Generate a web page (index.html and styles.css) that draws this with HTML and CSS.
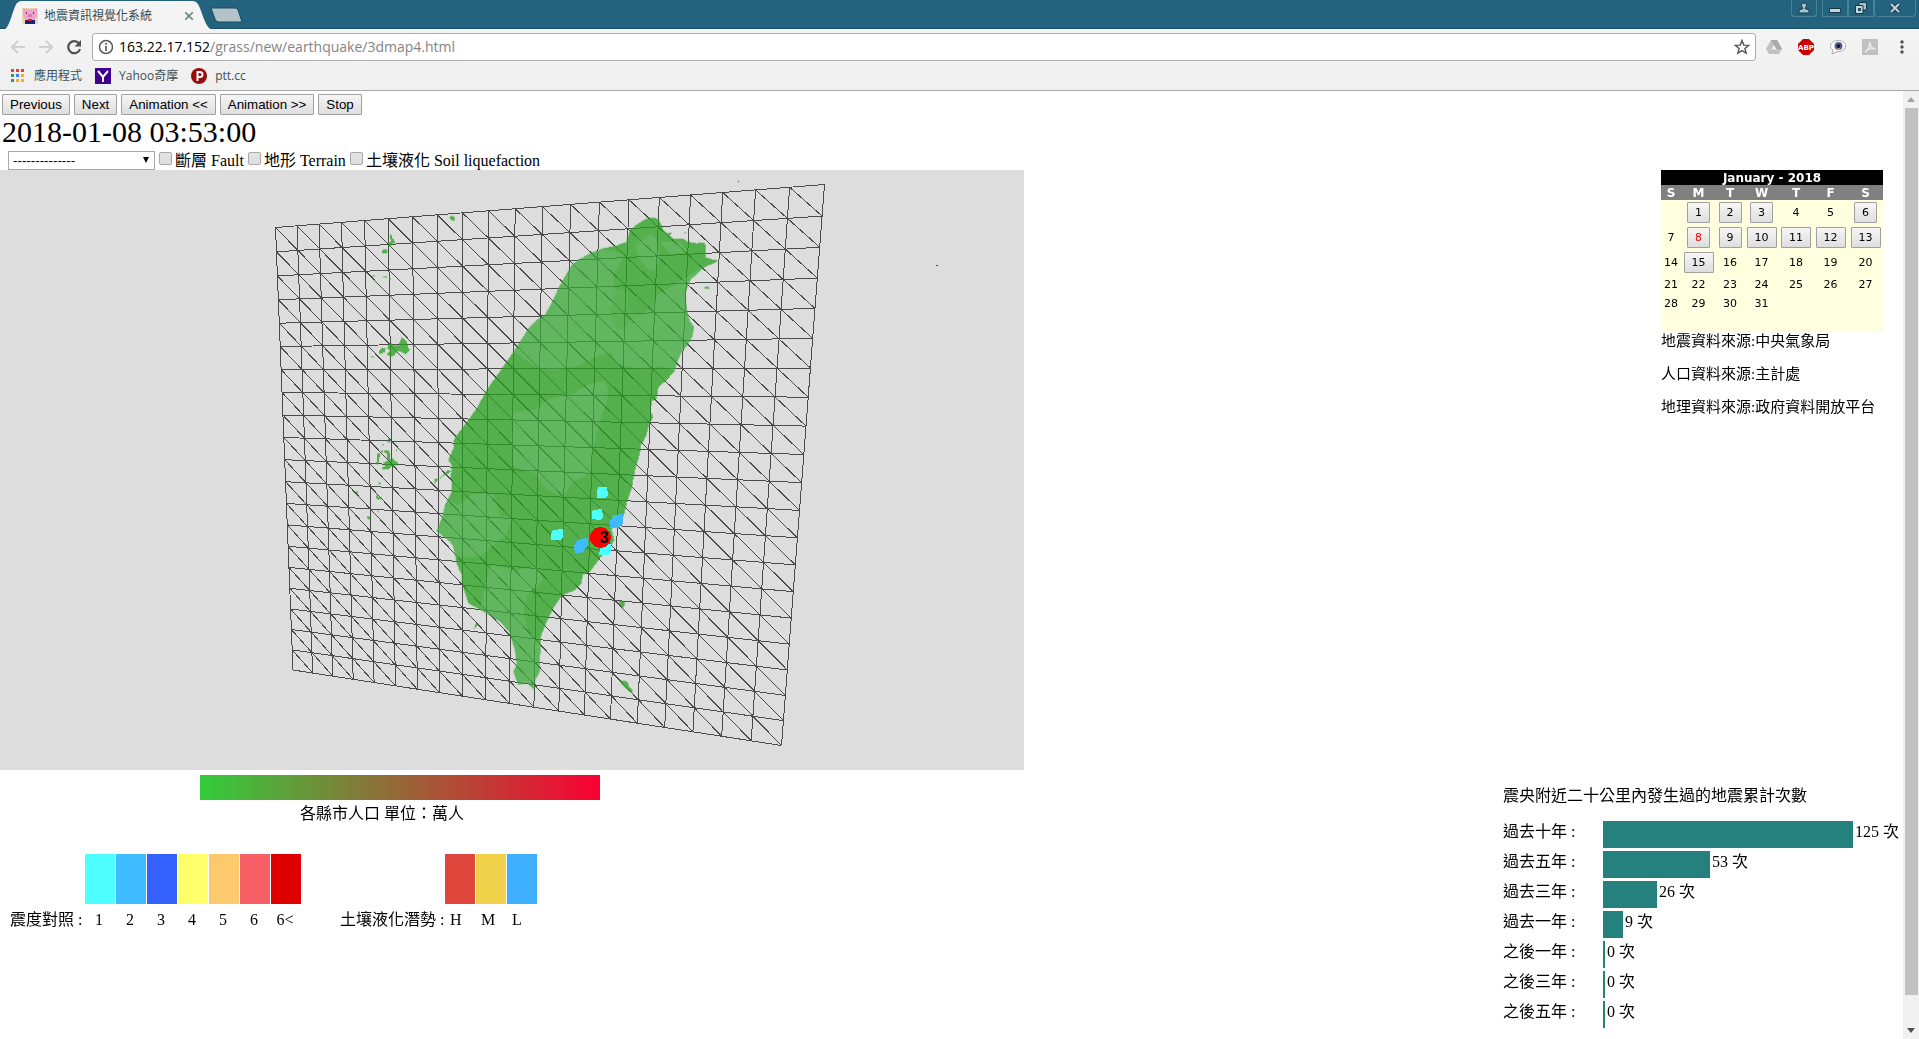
FILE: index.html
```html
<!DOCTYPE html>
<html lang="zh-Hant">
<head>
<meta charset="utf-8">
<title>地震資訊視覺化系統</title>
<link rel="stylesheet" href="styles.css">
</head>
<body>
<header class="browser">
  <div class="tabstrip">
    <div class="tab">
      <svg class="tab-shape" viewBox="0 0 208 29" aria-hidden="true"><path d="M0 29 C5 27 8 8 12 3 Q14 1 17 1 H188 Q191 1 193 4 C197 11 200 27 206 29Z" fill="#f4f4f4"/></svg>
      <svg class="icon" viewBox="0 0 16 16" aria-hidden="true"><path fill="#e8dca8" d="M0 0h16v16H0z"/><path fill="#f0a3cf" d="M1 0l4 1h6l4-1v9l-3 3H4L1 9z"/><path fill="#d97ab3" d="M6 6h4v3H6z"/><path fill="#733562" d="M4 4h1v2H4zm7 0h1v2h-1z"/><path fill="#172578" d="M3 12h10v4H3z"/><path fill="#d32738" d="M6 11h4v2H6z"/></svg>
      <span class="tab-title">地震資訊視覺化系統</span>
      <button class="plain" aria-label="關閉分頁"><svg class="icon-s" viewBox="0 0 8 8"><path d="M0 0l8 8M8 0L0 8" stroke="#6f8488" stroke-width="1.6"/></svg></button>
    </div>
    <button class="plain newtab" aria-label="新分頁"><svg viewBox="0 0 34 17"><path d="M2 1H26Q28 1 29 3L33 15H10Q7 15 6 12Z" fill="#b2c3ca" stroke="#194c62"/></svg></button>
    <div class="window">
      <button class="wbtn user" aria-label="使用者"><svg viewBox="0 0 12 12"><path d="M6 1a2.500 2.500 0 0 1 2 4L7 6.500l4 1.500v3H1V8l4-1.500L4 5a2.500 2.500 0 0 1 2-4z" fill="#a9c3ce" stroke="#15394a"/></svg></button>
      <div class="wgroup">
        <button class="wbtn" aria-label="最小化"><svg viewBox="0 0 12 12"><path d="M.500 6.500h11v4H.500z" fill="#c3d5dd" stroke="#15394a"/></svg></button>
        <button class="wbtn" aria-label="還原"><svg viewBox="0 0 12 12"><path d="M4 .500h7.500V8H4z" fill="#a9c3ce" stroke="#15394a"/><path d="M.500 3.500H8V11.500H.500z" fill="#c3d5dd" stroke="#15394a"/><path d="M3.500 6.500h2v2h-2z" fill="#24637e" stroke="#15394a"/></svg></button>
        <button class="wbtn wide" aria-label="關閉"><svg viewBox="0 0 12 12"><path d="M2 2l8 8M10 2l-8 8" stroke="#15394a" stroke-width="4"/><path d="M2 2l8 8M10 2l-8 8" stroke="#c3d5dd" stroke-width="2"/></svg></button>
      </div>
    </div>
  </div>
  <div class="toolbar">
    <div class="nav">
      <button class="plain" aria-label="上一頁"><svg class="icon" viewBox="0 0 16 16" fill="none" stroke="#cfcfcf" stroke-width="2"><path d="M15 8H2M8 2L2 8l6 6"/></svg></button>
      <button class="plain" aria-label="下一頁"><svg class="icon" viewBox="0 0 16 16" fill="none" stroke="#cfcfcf" stroke-width="2"><path d="M1 8h13M8 2l6 6-6 6"/></svg></button>
      <button class="plain" aria-label="重新載入"><svg class="icon" viewBox="0 0 16 16"><path d="M13 4.500A6 6 0 1 0 14 10" fill="none" stroke="#505050" stroke-width="2.200"/><path d="M15 1v6.500H8.500z" fill="#505050"/></svg></button>
    </div>
    <div class="omnibox">
      <svg class="icon" viewBox="0 0 16 16" aria-hidden="true"><circle cx="8" cy="8" r="6.500" fill="none" stroke="#5a5a5a" stroke-width="1.500"/><path d="M7.200 7h1.700v5H7.200zM7.200 4h1.700v1.700H7.200z" fill="#5a5a5a"/></svg>
      <span class="url"><b>163.22.17.152</b>/grass/new/earthquake/3dmap4.html</span>
      <button class="plain" aria-label="加入書籤"><svg class="icon" viewBox="0 0 16 16"><path d="M8 1.500l1.800 4.600 4.900.300-3.800 3.100 1.300 4.800L8 11.600l-4.200 2.700 1.300-4.800L1.300 6.400l4.900-.300z" fill="none" stroke="#555" stroke-width="1.400"/></svg></button>
    </div>
    <div class="exts">
      <svg class="icon" viewBox="0 0 16 16"><path d="M5 1h6l5 9-3 5H3l-3-5z" fill="#c2c2c2"/><path d="M5 1h6l5 9h-6z" fill="#aaa"/><path d="M8 6l2.500 4.500h-5z" fill="#f2f2f2"/></svg>
      <svg class="icon" viewBox="0 0 16 16"><path d="M5 0h6l5 5v6l-5 5H5l-5-5V5z" fill="#c80000"/><text x="8" y="11" class="abp">ABP</text></svg>
      <svg class="icon" viewBox="0 0 16 16"><path d="M8 1.500c5 0 7.500 2.500 7.500 5.500S13 12.500 8 12.500L2 15l1-4C-2 8 1 1.500 8 1.500z" fill="#fff" stroke="#aaa"/><circle cx="8.500" cy="7" r="4" fill="#5d6385"/><circle cx="8.500" cy="7" r="2" fill="#141a38"/><path d="M7 9h3v2H7z" fill="#b88a80"/></svg>
      <svg class="icon" viewBox="0 0 16 16"><path d="M0 0h16v16H0z" fill="#c0c0c0"/><path d="M3 13c3-2 5-6 4.500-10 1 5 3 7 6 7-4-1-8 0-10.500 3z" fill="none" stroke="#eee" stroke-width="1.300"/></svg>
      <svg class="icon" viewBox="0 0 16 16" fill="#505050"><circle cx="8" cy="3" r="1.700"/><circle cx="8" cy="8" r="1.700"/><circle cx="8" cy="13" r="1.700"/></svg>
    </div>
  </div>
  <nav class="bookmarks">
    <a href="#apps"><svg class="icon" viewBox="0 0 16 16"><path fill="#ea3c34" d="M1 1h3v3H1zM6 1h3v3H6zM11 1h3v3h-3z"/><path fill="#2e9d58" d="M1 6h3v3H1zM1 11h3v3H1z"/><path fill="#3f80ef" d="M6 6h3v3H6z"/><path fill="#f3b01c" d="M11 6h3v3h-3zM6 11h3v3H6zM11 11h3v3h-3z"/></svg>應用程式</a>
    <a href="#yahoo"><svg class="icon" viewBox="0 0 16 16"><path fill="#400090" d="M0 0h16v16H0z"/><path d="M3 3l5 6 5-6M8 9v5" fill="none" stroke="#fff" stroke-width="2"/></svg>Yahoo奇摩</a>
    <a href="#ptt"><svg class="icon" viewBox="0 0 16 16"><circle cx="8" cy="8" r="8" fill="#970c0c"/><path d="M6.500 13V4H9a2.500 2.500 0 0 1 0 5H6.500" fill="none" stroke="#fff" stroke-width="2"/></svg>ptt.cc</a>
  </nav>
</header>

<div class="viewport">
  <main class="page">
    <div class="playback">
      <button class="btn">Previous</button>
      <button class="btn">Next</button>
      <button class="btn">Animation &lt;&lt;</button>
      <button class="btn">Animation &gt;&gt;</button>
      <button class="btn">Stop</button>
    </div>
    <div class="time">2018-01-08 03:53:00</div>
    <div class="layers">
      <div class="picker"><select aria-label="圖層"><option>--------------</option></select></div>
      <label><input type="checkbox">斷層 Fault</label>
      <label><input type="checkbox">地形 Terrain</label>
      <label><input type="checkbox">土壤液化 Soil liquefaction</label>
    </div>
    <div class="board">
      <svg class="map" viewBox="0 170 1024 600" role="img" aria-label="台灣地震地圖">
        <defs>
          <clipPath id="coast"><path id="island" d="M670 22 685 28 695 45 700 60 715 72 730 85 760 87 773 95 800 100 825 97 827 120 828 142 845 148 860 150 858 157 845 162 820 173 805 188 785 205 773 225 767 250 768 280 773 310 780 335 792 350 787 380 772 405 755 425 742 455 733 485 710 510 685 532 680 565 665 573 662 605 670 620 658 640 648 680 633 705 630 730 615 780 606 830 590 880 580 920 560 930 545 960 553 990 540 1010 510 1045 480 1085 458 1095 455 1120 435 1140 395 1157 380 1180 370 1195 350 1235 332 1280 332 1320 328 1350 330 1385 315 1410 313 1440 290 1418 265 1425 250 1385 260 1365 255 1320 242 1280 238 1265 210 1235 170 1210 115 1180 105 1150 97 1125 95 1095 80 1060 70 1010 60 995 20 963 35 925 45 885 65 845 63 795 65 765 55 750 70 715 73 685 100 650 140 595 170 540 230 455 280 380 295 355 320 330 345 315 370 270 385 235 425 165 445 150 480 130 520 115 555 108 590 95 600 60 625 40 645 28Z"/></clipPath>
        </defs>
        <path id="grid" class="grid"/>
        <g class="land" transform="translate(430 210) scale(.33333)">
          <use href="#island" class="dark"/>
          <g class="light" clip-path="url(#coast)">
            <path d="M340 150 500 118 545 122 590 135 565 165 550 200 556 240 590 245 597 300 625 315 665 295 680 255 740 220 800 180 870 150 870 500 720 480 700 468 640 478 560 462 545 428 510 435 450 465 380 480 325 475 285 450 240 420Z"/>
            <path class="mid" d="M550 245 590 245 597 300 612 312 580 355 560 355 540 300Z"/>
            <path d="M250 605 315 600 350 570 430 550 470 525 525 510 535 545 530 575 505 650 490 720 482 790 430 815 400 860 350 840 315 790 250 770 245 690Z"/>
            <path d="M0 960 60 870 85 885 130 850 190 850 210 915 245 925 225 980 185 1010 150 1040 60 1040Z"/>
            <path d="M180 1065 260 1080 325 1070 340 1110 290 1160 280 1200 290 1260 335 1310 340 1450 240 1450 230 1270 150 1200 165 1130Z"/>
            <path d="M615 105 665 70 682 95 690 140 675 185 650 175 625 140ZM690 95 750 95 775 125 720 132Z"/>
          </g>
          <path class="dark" d="M57 22l8-5 9 4-1 10-8 0zM14 805l14 2 27-27 10 4-22 12-22 16-6 10zM132 1256l3-12 8-8 3 8-8 6zM565 1172l20 3-4 18-8-2zM568 1412l24 2 6 16 10 12-3 6-12-7-16-16zM822 230l14 0 2 5-12 1zM715 70l8-5 2 6-6 4zM763 66h3v4h-3z"/>
          <g class="dark" transform="translate(-510 -120)">
            <path d="M390 193l6 3-1 8 8 5 1 10-9 2-2 7-8 2 0-10 7-8zM366 240l16-2 1 10-8 4-9-4zM333 315l14 3-1 3-10-2zM369 318l13 2-3 4-10-3zM387 322l8 4-8 6zM474 160h5v4h-5zM425 502l14 11 5 18 6 10-6 6-8 6-14-9-12 1-6 10-8 4-12-2-4-6 10-8-8-8 4-15 10 1 8 6 12-2zM358 540l9-7 10 3-3 10-12 6-5-4zM334 560l6-2 1 3-5 2z"/>
            <path d="M384 805l8 6-4 8-9-3 6-3zM367 822h5v5h-5zM408 838l3 3-4 7zM363 842h6v6h-6zM374 841h12l4 10-1 18 10-4 4 7 12 5 0 9-20 2-10 9-18 2-2-6 12-7-8-8 14-6-3-22-10-3zM352 850h8v5l-5 26-8 2 4-10z"/>
            <path d="M288 964h6v5h-6zM346 976l8 1 2 5 10 0-2 6-14-1zM351 1022l6 1-2 5zM322 1040l10 0-2 10-10-5zM385 1032h8v2h-8zM405 1030h4v6h-4zM350 936l6 1 8 4-4 2z"/>
          </g>
        </g>
        <path d="M738 181h1v1h-1zM936 265h2v1h-2z" fill="#444"/>
        <g fill="#4dffff"><path d="M598 487h9l1 8-2 3h-9v-7zM593 510l9-1 1 8-3 3-8-1v-6zM553 530l10-1v8l-2 3h-10v-6zM601 545l10-1v8l-2 3h-10z"/></g>
        <g fill="#3ebcff"><path d="M614 515l9-1v9l-5 5h-8v-7zM579 539l9-1v7l-6 8h-7l-1-7z"/></g>
        <circle cx="600.500" cy="537.500" r="10.500" fill="#f00"/>
        <text x="600" y="543" class="mag">3</text>
      </svg>

      <aside class="side">
        <table class="calendar">
          <caption>January - 2018</caption>
          <colgroup><col class="c1"><col class="c2"><col class="c3"><col class="c2"><col class="c4"><col class="c2"><col class="c2"></colgroup>
          <thead><tr><th>S</th><th>M</th><th>T</th><th>W</th><th>T</th><th>F</th><th>S</th></tr></thead>
          <tbody>
            <tr class="tall"><td></td><td><button>1</button></td><td><button>2</button></td><td><button>3</button></td><td>4</td><td>5</td><td><button>6</button></td></tr>
            <tr class="tall"><td>7</td><td><button class="today">8</button></td><td><button>9</button></td><td><button>10</button></td><td><button>11</button></td><td><button>12</button></td><td><button>13</button></td></tr>
            <tr class="tall"><td>14</td><td><button>15</button></td><td>16</td><td>17</td><td>18</td><td>19</td><td>20</td></tr>
            <tr><td>21</td><td>22</td><td>23</td><td>24</td><td>25</td><td>26</td><td>27</td></tr>
            <tr><td>28</td><td>29</td><td>30</td><td>31</td><td></td><td></td><td></td></tr>
            <tr><td colspan="7"></td></tr>
          </tbody>
        </table>
        <p>地震資料來源:中央氣象局</p>
        <p>人口資料來源:主計處</p>
        <p>地理資料來源:政府資料開放平台</p>
      </aside>

      <section class="legends">
        <div class="ramp"></div>
        <div class="ramp-label">各縣市人口 單位：萬人</div>
        <div class="scales">
          <div class="scale">
            <span class="name">震度對照 :</span>
            <span class="step center i1">1</span><span class="step center i2">2</span><span class="step center i3">3</span><span class="step center i4">4</span><span class="step center i5">5</span><span class="step center i6">6</span><span class="step center i7">6&lt;</span>
          </div>
          <div class="scale">
            <span class="name long">土壤液化潛勢 :</span>
            <span class="step lh">H</span><span class="step lm">M</span><span class="step ll">L</span>
          </div>
        </div>
      </section>

      <section class="chart">
        <h2>震央附近二十公里內發生過的地震累計次數</h2>
        <div class="row"><span class="period">過去十年 :</span><span class="bar" style="width:250px"></span><span>125 次</span></div>
        <div class="row"><span class="period">過去五年 :</span><span class="bar" style="width:107px"></span><span>53 次</span></div>
        <div class="row"><span class="period">過去三年 :</span><span class="bar" style="width:54px"></span><span>26 次</span></div>
        <div class="row"><span class="period">過去一年 :</span><span class="bar" style="width:20px"></span><span>9 次</span></div>
        <div class="row"><span class="period">之後一年 :</span><span class="bar" style="width:2px"></span><span>0 次</span></div>
        <div class="row"><span class="period">之後三年 :</span><span class="bar" style="width:2px"></span><span>0 次</span></div>
        <div class="row"><span class="period">之後五年 :</span><span class="bar" style="width:2px"></span><span>0 次</span></div>
      </section>
    </div>
  </main>
  <div class="scrollbar" aria-hidden="true">
    <svg viewBox="0 0 16 17"><path d="M4 11l4-5 4 5z" fill="#a3a3a3"/></svg>
    <div class="track"><div class="thumb"></div></div>
    <svg viewBox="0 0 16 17"><path d="M4 6l4 5 4-5z" fill="#505050"/></svg>
  </div>
</div>
<script src="grid.js"></script>
</body>
</html>
```
FILE: grid.js
```js
// Draws the 20 x 20 wireframe plane, seen in perspective through its four corners.
const [x0, y0, x1, y1, x2, y2, x3, y3] = [275.5, 227.5, 824.5, 184.5, 781.5, 745.5, 293, 670];
const dx1 = x1 - x2, dx2 = x3 - x2, sx = x0 - x1 + x2 - x3;
const dy1 = y1 - y2, dy2 = y3 - y2, sy = y0 - y1 + y2 - y3;
const den = dx1 * dy2 - dx2 * dy1;
const g = (sx * dy2 - dx2 * sy) / den;
const h = (dx1 * sy - sx * dy1) / den;
const point = (i, j) => {
  const u = i / 20, v = j / 20, w = g * u + h * v + 1;
  const x = ((x1 - x0 + g * x1) * u + (x3 - x0 + h * x3) * v + x0) / w;
  const y = ((y1 - y0 + g * y1) * u + (y3 - y0 + h * y3) * v + y0) / w;
  return x.toFixed(1) + ' ' + y.toFixed(1);
};
let d = '';
for (let k = 0; k <= 20; k++) {
  d += `M${point(k, 0)}L${point(k, 20)}M${point(0, k)}L${point(20, k)}`;
}
for (let k = -19; k < 20; k++) {
  d += `M${point(Math.max(k, 0), Math.max(-k, 0))}L${point(Math.min(20, 20 + k), Math.min(20, 20 - k))}`;
}
document.getElementById('grid').setAttribute('d', d);
```
FILE: styles.css
```css
* { box-sizing: border-box; }
body {
  margin: 0;
  height: 100vh;
  display: flex;
  flex-direction: column;
  overflow: hidden;
  background: #fff;
  color: #000;
  font: 16px/20px "Liberation Serif", "Noto Sans CJK TC", serif;
}
svg { display: block; }
.icon { width: 16px; height: 16px; flex: none; }
.icon-s { width: 8px; height: 8px; }
.plain { border: 0; background: none; padding: 0; }

/* browser frame */
.browser {
  flex: none;
  background: linear-gradient(#f6f6f6, #efefef);
  border-bottom: 1px solid #a9a9a9;
  font-family: "Open Sans", "Noto Sans CJK TC", sans-serif;
}
.tabstrip { display: flex; height: 29px; background: #24637e; border-bottom: 1px solid #1b4d66; }
.tab {
  position: relative;
  display: flex;
  align-items: center;
  width: 204px;
  height: 29px;
  padding: 2px 11px 0 22px;
  font-size: 12px;
}
.tab-shape { position: absolute; left: 5px; top: 0; width: 208px; height: 29px; }
.tab > :not(.tab-shape) { position: relative; }
.tab-title { flex: 1; margin-left: 6px; color: #33494f; }
.newtab { margin: 7px 0 0 5px; align-self: flex-start; }
.newtab svg { width: 34px; height: 17px; }
.window { display: flex; gap: 5px; margin-left: auto; padding-right: 3px; align-items: flex-start; }
.wgroup { display: flex; }
.wbtn {
  display: flex;
  justify-content: center;
  width: 26px;
  height: 17px;
  padding: 2px 0;
  background: #24637e;
  border: 1px solid #4b8299;
  border-top: 0;
}
.wbtn svg { width: 12px; height: 12px; flex: none; }
.user { border-radius: 0 0 4px 4px; }
.wide { width: 42px; border-radius: 0 0 4px 4px; }
.toolbar { display: flex; align-items: center; height: 36px; padding: 0 9px 0 10px; gap: 10px; }
.nav { display: flex; gap: 12px; }
.omnibox {
  flex: 1;
  display: flex;
  align-items: center;
  gap: 5px;
  height: 28px;
  padding: 0 5px;
  background: #fff;
  border: 1px solid #acacac;
  border-radius: 3px;
}
.url { flex: 1; font-size: 14px; color: #848484; }
.url b { font-weight: 400; color: #000; }
.exts { display: flex; gap: 16px; }
.abp { font: bold 7px "DejaVu Sans", sans-serif; fill: #fff; text-anchor: middle; }
.bookmarks { display: flex; gap: 13px; height: 25px; padding: 0 10px 3px; align-items: center; }
.bookmarks a { display: flex; gap: 8px; font-size: 12px; color: #3b5155; text-decoration: none; }
.bookmarks .icon { margin-top: 2px; }

/* page */
.viewport { flex: 1; min-height: 0; display: flex; }
.page { flex: 1; min-width: 0; overflow: hidden; }
.playback { display: flex; gap: 4px; padding: 3px 2px 0; }
.btn, .calendar button {
  background: linear-gradient(#f6f6f6, #dedede);
  border: 1px solid #a0a0a0;
  border-radius: 1px;
  color: #000;
}
.btn { height: 21px; padding: 0 7px; font-family: "Liberation Sans", Arial, sans-serif; }
.time { height: 36px; padding-left: 2px; font-size: 30px; line-height: 34px; }
.layers { display: flex; align-items: center; gap: 4px; height: 19px; padding-left: 8px; line-height: 19px; }
.picker { position: relative; width: 147px; height: 19px; }
.picker select {
  appearance: none;
  display: block;
  width: 100%;
  height: 19px;
  padding: 0 4px;
  border: 1px solid #a9a9a9;
  border-radius: 0;
  background: #fff;
  color: #000;
  font-family: "Liberation Sans", Arial, sans-serif;
}
.picker::after {
  content: "";
  position: absolute;
  right: 6px;
  top: 6px;
  border: solid transparent;
  border-width: 6px 3px 0;
  border-top-color: #000;
  pointer-events: none;
}
.layers label { display: flex; }
.layers input {
  appearance: none;
  width: 13px;
  height: 13px;
  margin: 1px 3px 0 0;
  border: 1px solid #a8a8a8;
  border-radius: 2px;
  background: linear-gradient(#e4e4e4, #dedede);
}
.layers input:checked { background: #555; }
.board { display: grid; grid-template-columns: 1024px 1fr; }
.map { width: 1024px; height: 600px; background: #ddd; shape-rendering: crispEdges; }
.grid { fill: none; stroke: #4b4b4b; stroke-width: 1; }
.land { opacity: .75; }
.dark { fill: #24a01d; }
.light { fill: #39a934; }
.mid { fill: #2fa529; }
.mag { font: bold 16px "Liberation Sans", sans-serif; }

.side { justify-self: end; width: 222px; margin-right: 20px; font-size: 15px; }
.side p { margin: 0 0 13px; white-space: nowrap; line-height: 20px; }
.calendar {
  width: 222px;
  margin-bottom: -1px;
  table-layout: fixed;
  border-collapse: collapse;
  background: #ffffe0;
  font: 11px/15px "DejaVu Sans", Verdana, sans-serif;
  text-align: center;
}
.calendar caption, .calendar th {
  height: 15px;
  padding: 1px 0 0;
  color: #fff;
  font-weight: bold;
  font-size: 12px;
  line-height: 14px;
}
.calendar caption { background: #000; }
.calendar th { background: #808080; }
.calendar td { padding: 0; height: 19px; }
.calendar .tall td { height: 25px; }
.calendar button { height: 21px; padding: 0 7px; font: inherit; display: block; margin: 0 auto; }
.calendar .today { color: #f00; }
.c1 { width: 20px; }
.c2 { width: 35px; }
.c3 { width: 28px; }
.c4 { width: 34px; }

.ramp { width: 400px; height: 25px; margin: 5px 0 0 200px; background: linear-gradient(90deg, #32cd3c, #fa0032); }
.ramp-label { margin: 4px 0 30px 300px; }
.scales { display: flex; gap: 39px; padding-left: 10px; }
.scale { display: flex; align-items: flex-end; gap: 1px; }
.name { width: 74px; white-space: nowrap; }
.name.long { width: 104px; }
.step { width: 30px; padding-left: 5px; }
.step.center { padding: 0 2px 0 0; text-align: center; }
.step::before { content: ""; display: block; width: 30px; height: 50px; margin-bottom: 6px; background: var(--c); }
.step:not(.center)::before { margin-left: -5px; }
.i1 { --c: #4dffff; }
.i2 { --c: #3ebcff; }
.i3 { --c: #3562ff; }
.i4 { --c: #ffff6b; }
.i5 { --c: #fcca6d; }
.i6 { --c: #f76067; }
.i7 { --c: #de0000; }
.lh { --c: #df463c; }
.lm { --c: #efd24a; }
.ll { --c: #3fafff; }

.chart { justify-self: end; width: 400px; padding-top: 16px; }
.chart h2 { margin: 0 0 15px; font-size: 16px; font-weight: 400; line-height: 20px; }
.row { display: flex; gap: 2px; height: 27px; margin-bottom: 3px; line-height: 22px; }
.period { width: 98px; }
.bar { background: #24817e; }

.scrollbar { width: 16px; display: flex; flex-direction: column; background: #f1f1f1; }
.scrollbar svg { width: 16px; height: 17px; flex: none; }
.track { flex: 1; padding: 0 1px 0 2px; }
.thumb { height: 97%; background: #c1c1c1; }
```
